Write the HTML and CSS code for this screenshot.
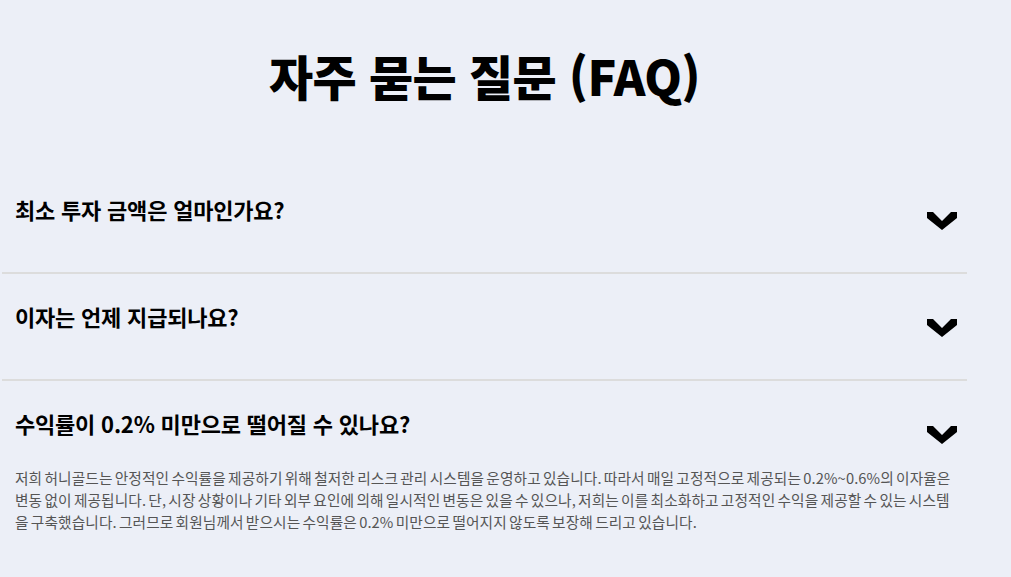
FILE: index.html
```html
<!DOCTYPE html>
<html lang="ko">
<head>
<meta charset="utf-8">
<link rel="stylesheet" href="styles.css">
</head>
<body>
<div class="faq">
  <h1 class="faq-title">자주 묻는 질문 (FAQ)</h1>
  <div class="faq-item">
    <div class="faq-q">
      <h3 class="faq-q-text">최소 투자 금액은 얼마인가요?</h3>
      <svg class="chev" width="30" height="20" viewBox="0 0 30 20"><polygon points="0,1 6,1 15,10 24,1 30,1 30,7 15,19 0,7" fill="#000"/></svg>
    </div>
  </div>
  <div class="faq-item">
    <div class="faq-q">
      <h3 class="faq-q-text">이자는 언제 지급되나요?</h3>
      <svg class="chev" width="30" height="20" viewBox="0 0 30 20"><polygon points="0,1 6,1 15,10 24,1 30,1 30,7 15,19 0,7" fill="#000"/></svg>
    </div>
  </div>
  <div class="faq-item open">
    <div class="faq-q">
      <h3 class="faq-q-text">수익률이 0.2% 미만으로 떨어질 수 있나요?</h3>
      <svg class="chev" width="30" height="20" viewBox="0 0 30 20"><polygon points="0,1 6,1 15,10 24,1 30,1 30,7 15,19 0,7" fill="#000"/></svg>
    </div>
    <p class="faq-a">저희 허니골드는 안정적인 수익률을 제공하기 위해 철저한 리스크 관리 시스템을 운영하고 있습니다. 따라서 매일 고정적으로 제공되는 0.2%~0.6%의 이자율은 변동 없이 제공됩니다. 단, 시장 상황이나 기타 외부 요인에 의해 일시적인 변동은 있을 수 있으나, 저희는 이를 최소화하고 고정적인 수익을 제공할 수 있는 시스템을 구축했습니다. 그러므로 회원님께서 받으시는 수익률은 0.2% 미만으로 떨어지지 않도록 보장해 드리고 있습니다.</p>
  </div>
</div>
</body>
</html>
```

FILE: styles.css
```css
html, body {
  margin: 0;
  padding: 0;
  background: #eceff7;
}
body {
  font-family: "Noto Sans CJK KR", "Noto Sans", sans-serif;
  color: #000;
}
.faq {
  width: 965px;
  margin-left: 2px;
}
.faq-title {
  text-align: center;
  font-size: 48px;
  font-weight: 900;
  margin: 0;
  padding-top: 42px;
  line-height: 66px;
  letter-spacing: -0.6px;
}
.faq-item {
  border-bottom: 2px solid #dcdcdc;
  padding: 0 10px 0 13px;
}
.faq-item:first-of-type {
  margin-top: 59px;
}
.faq-item.open {
  border-bottom: none;
}
.faq-q {
  display: flex;
  justify-content: space-between;
  align-items: flex-start;
  height: 105px;
  box-sizing: border-box;
  padding-top: 27px;
}
.faq-q-text {
  margin: 0;
  font-size: 22px;
  font-weight: 700;
  line-height: 30px;
  letter-spacing: -0.2px;
}
.chev {
  margin-top: 17px;
}
.faq-a {
  margin: -19px 0 0;
  font-size: 14.7px;
  line-height: 22px;
  color: #555;
  letter-spacing: 0.1px;
  word-spacing: -2px;
}
```
